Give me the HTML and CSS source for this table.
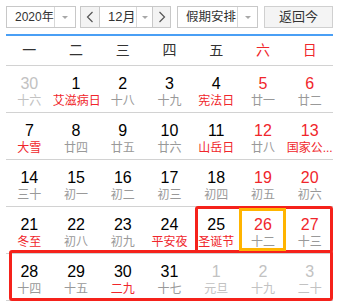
FILE: index.html
```html
<!DOCTYPE html>
<html lang="zh-CN">
<head>
<meta charset="utf-8">
<link rel="stylesheet" href="styles.css">
</head>
<body>
<div class="cal">
  <div class="toolbar">
    <div class="select year"><span class="label ylabel">2020年</span><span class="drop"><i class="tri"></i></span></div>
    <div class="month-group">
      <span class="nav"><svg width="8" height="12" viewBox="0 0 8 12"><polyline points="6.5,1 1.5,6 6.5,11" fill="none" stroke="#555" stroke-width="1.2"/></svg></span>
      <div class="month"><span class="label mlabel">12月</span><span class="drop mdrop"><i class="tri"></i></span></div>
      <span class="nav"><svg width="8" height="12" viewBox="0 0 8 12"><polyline points="1.5,1 6.5,6 1.5,11" fill="none" stroke="#555" stroke-width="1.2"/></svg></span>
    </div>
    <div class="select holiday"><span class="label hlabel">假期安排</span><span class="drop hdrop"><i class="tri"></i></span></div>
    <div class="btn">返回今</div>
  </div>
  <div class="weekdays">
    <span>一</span><span>二</span><span>三</span><span>四</span><span>五</span><span class="red">六</span><span class="red">日</span>
  </div>
  <div class="grid">
    <div class="week">
      <div class="day off"><span class="num">30</span><span class="lunar">十六</span></div>
      <div class="day"><span class="num">1</span><span class="lunar hol clip">艾滋病日</span></div>
      <div class="day"><span class="num">2</span><span class="lunar">十八</span></div>
      <div class="day"><span class="num">3</span><span class="lunar">十九</span></div>
      <div class="day"><span class="num">4</span><span class="lunar hol">宪法日</span></div>
      <div class="day we"><span class="num">5</span><span class="lunar">廿一</span></div>
      <div class="day we"><span class="num">6</span><span class="lunar">廿二</span></div>
    </div>
    <div class="week">
      <div class="day"><span class="num">7</span><span class="lunar hol">大雪</span></div>
      <div class="day"><span class="num">8</span><span class="lunar">廿四</span></div>
      <div class="day"><span class="num">9</span><span class="lunar">廿五</span></div>
      <div class="day"><span class="num">10</span><span class="lunar">廿六</span></div>
      <div class="day"><span class="num">11</span><span class="lunar hol">山岳日</span></div>
      <div class="day we"><span class="num">12</span><span class="lunar">廿八</span></div>
      <div class="day we"><span class="num">13</span><span class="lunar hol clip">国家公...</span></div>
    </div>
    <div class="week">
      <div class="day"><span class="num">14</span><span class="lunar">三十</span></div>
      <div class="day"><span class="num">15</span><span class="lunar">初一</span></div>
      <div class="day"><span class="num">16</span><span class="lunar">初二</span></div>
      <div class="day"><span class="num">17</span><span class="lunar">初三</span></div>
      <div class="day"><span class="num">18</span><span class="lunar">初四</span></div>
      <div class="day we"><span class="num">19</span><span class="lunar">初五</span></div>
      <div class="day we"><span class="num">20</span><span class="lunar">初六</span></div>
    </div>
    <div class="week">
      <div class="day"><span class="num">21</span><span class="lunar hol">冬至</span></div>
      <div class="day"><span class="num">22</span><span class="lunar">初八</span></div>
      <div class="day"><span class="num">23</span><span class="lunar">初九</span></div>
      <div class="day"><span class="num">24</span><span class="lunar hol">平安夜</span></div>
      <div class="day"><span class="num">25</span><span class="lunar hol">圣诞节</span></div>
      <div class="day we"><span class="num">26</span><span class="lunar">十二</span></div>
      <div class="day we"><span class="num">27</span><span class="lunar">十三</span></div>
    </div>
    <div class="week">
      <div class="day"><span class="num">28</span><span class="lunar">十四</span></div>
      <div class="day"><span class="num">29</span><span class="lunar">十五</span></div>
      <div class="day"><span class="num">30</span><span class="lunar hol">二九</span></div>
      <div class="day"><span class="num">31</span><span class="lunar">十七</span></div>
      <div class="day off"><span class="num">1</span><span class="lunar">元旦</span></div>
      <div class="day off"><span class="num">2</span><span class="lunar">十九</span></div>
      <div class="day off"><span class="num">3</span><span class="lunar">二十</span></div>
    </div>
    <div class="mark mark-a"></div>
    <div class="mark mark-b"></div>
    <div class="today"></div>
  </div>
</div>
</body>
</html>
```

FILE: styles.css
```css
* { box-sizing: border-box; }
body {
  margin: 0;
  background: #fff;
  font-family: "Liberation Sans", "Noto Sans CJK SC", sans-serif;
  color: #000;
}
.cal {
  width: 341px;
  padding: 6px 8px 0 6px;
}
.toolbar {
  display: flex;
  height: 22px;
  font-size: 13px;
  color: #333;
}
.select {
  display: flex;
  border: 1px solid #c8c8c8;
  background: #fff;
}
.year { width: 70px; }
.holiday { width: 81px; margin-left: 6px; }
.label {
  flex: 1;
  line-height: 20px;
  padding-left: 9px;
  white-space: nowrap;
}
.ylabel { font-size: 12px; padding-left: 8px; }
.hlabel { font-size: 12.5px; padding-left: 8px; }
.drop {
  width: 22px;
  flex: none;
  border-left: 1px solid #d8d8d8;
  display: flex;
  align-items: center;
  justify-content: center;
}
.hdrop { width: 20px; }
.tri {
  width: 0;
  height: 0;
  border-left: 3px solid transparent;
  border-right: 3px solid transparent;
  border-top: 3px solid #a8a8a8;
}
.month-group {
  display: flex;
  width: 91px;
  margin-left: 4px;
  border: 1px solid #c8c8c8;
}
.nav {
  width: 18px;
  background: #f3f3f3;
  display: flex;
  align-items: center;
  justify-content: center;
}
.nav:last-child { width: 17px; }
.month {
  display: flex;
  width: 54px;
  border-left: 1px solid #c8c8c8;
  border-right: 1px solid #c8c8c8;
  background: #fff;
}
.mlabel { padding-left: 8px; }
.mdrop { width: 16px; }
.btn {
  width: 69px;
  margin-left: 6px;
  border: 1px solid #d0d0d0;
  background: #f4f4f4;
  text-align: center;
  line-height: 20px;
}
.weekdays {
  display: grid;
  grid-template-columns: repeat(7, 1fr);
  margin-top: 6px;
  border-top: 2px solid #4a9ff5;
  border-bottom: 1px solid #d2d2d2;
  height: 32px;
  font-size: 14px;
  line-height: 29px;
  text-align: center;
  color: #333;
}
.red { color: #f0262b; }
.grid {
  position: relative;
}
.week {
  display: grid;
  grid-template-columns: repeat(7, 1fr);
  height: 47px;
  border-bottom: 1px solid #d2d2d2;
}
.day {
  display: flex;
  flex-direction: column;
  align-items: center;
  padding-top: 9px;
  min-width: 0;
}
.num {
  font-size: 16px;
  line-height: 18px;
}
.lunar {
  font-size: 12px;
  line-height: 16px;
  color: #999;
  white-space: nowrap;
  max-width: 100%;
}
.clip { overflow: hidden; }
.hol { color: #f0262b; }
.we .num { color: #f0262b; }
.off .num, .off .lunar { color: #c2c2c2; }
.mark {
  position: absolute;
  border: 3px solid #f5221b;
  border-radius: 3px;
}
.mark-a { left: 189px; top: 140px; width: 138px; height: 47px; }
.mark-b { left: 3px; top: 184px; width: 324px; height: 51px; }
.today {
  position: absolute;
  left: 233px;
  top: 142px;
  width: 47px;
  height: 43px;
  border: 3px solid #ffb400;
}
```
